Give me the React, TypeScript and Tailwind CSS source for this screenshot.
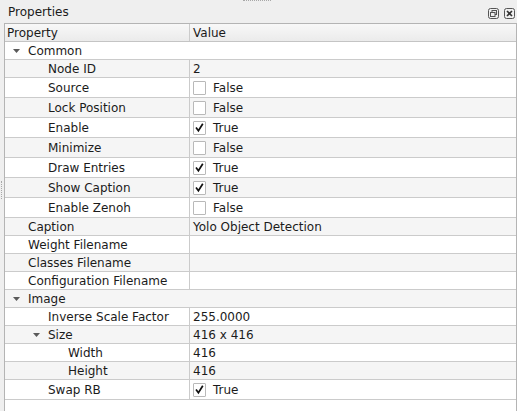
import React from "react";

type Row = {
	label: string;
	level: number;
	group?: boolean;
	expander?: boolean;
	value?: string;
	check?: boolean;
	tall?: boolean;
};

const rows: Row[] = [
	{ label: "Common", level: 0, group: true, expander: true },
	{ label: "Node ID", level: 1, value: "2" },
	{ label: "Source", level: 1, check: false, tall: true },
	{ label: "Lock Position", level: 1, check: false, tall: true },
	{ label: "Enable", level: 1, check: true, tall: true },
	{ label: "Minimize", level: 1, check: false, tall: true },
	{ label: "Draw Entries", level: 1, check: true, tall: true },
	{ label: "Show Caption", level: 1, check: true, tall: true },
	{ label: "Enable Zenoh", level: 1, check: false, tall: true },
	{ label: "Caption", level: 0, value: "Yolo Object Detection" },
	{ label: "Weight Filename", level: 0, value: "" },
	{ label: "Classes Filename", level: 0, value: "" },
	{ label: "Configuration Filename", level: 0, value: "" },
	{ label: "Image", level: 0, group: true, expander: true },
	{ label: "Inverse Scale Factor", level: 1, value: "255.0000" },
	{ label: "Size", level: 1, expander: true, value: "416 x 416" },
	{ label: "Width", level: 2, value: "416" },
	{ label: "Height", level: 2, value: "416" },
	{ label: "Swap RB", level: 1, check: true, tall: true },
];

const indent = ["pl-[23px]", "pl-[43px]", "pl-[63px]"];
const arrowPos = ["left-[8px]", "left-[28px]", "left-[48px]"];

function Arrow({ level }: { level: number }) {
	return (
		<svg
			className={`absolute top-1/2 -translate-y-1/2 ${arrowPos[level]}`}
			width="7"
			height="4"
			viewBox="0 0 7 4"
		>
			<path d="M0 0 L7 0 L3.5 4 Z" fill="#5a5a5a" />
		</svg>
	);
}

function CheckBox({ on }: { on: boolean }) {
	return (
		<span className="w-[13px] h-[14px] border border-[#b9b9b9] bg-white rounded-[1px] flex items-center justify-center">
			{on && (
				<svg width="11" height="11" viewBox="0 0 11 11">
					<path
						d="M2 5.6 L4.4 8.8 L8.8 1.8"
						fill="none"
						stroke="#111"
						strokeWidth="1.7"
					/>
				</svg>
			)}
		</span>
	);
}

function PropRow({ row, odd }: { row: Row; odd: boolean }) {
	const bg = odd ? "bg-[#f5f5f5]" : "bg-white";
	const h = row.tall ? "h-[20px]" : "h-[18px]";
	return (
		<div className={`flex ${h} border-b border-[#cbcbcb] ${bg}`}>
			<div
				className={`relative flex items-center ${indent[row.level]} ${
					row.group ? "flex-1" : "w-[185px] border-r border-[#cbcbcb]"
				}`}
			>
				{row.expander && <Arrow level={row.level} />}
				{row.label}
			</div>
			{!row.group && (
				<div className="flex-1 flex items-center pl-[3px]">
					{row.check !== undefined ? (
						<div className="flex items-center gap-[7px]">
							<CheckBox on={row.check} />
							<span>{row.check ? "True" : "False"}</span>
						</div>
					) : (
						row.value
					)}
				</div>
			)}
		</div>
	);
}

export default function App() {
	return (
		<div
			className="relative w-[517px] h-[411px] bg-[#efefef] flex flex-col text-[12px] text-[#1b1b1b] overflow-hidden"
			style={{ fontFamily: '"DejaVu Sans", Verdana, sans-serif' }}
		>
			{/* grips */}
			<div className="absolute top-0 left-[243px] w-[28px] h-[1px] border-t border-dotted border-[#a8a8a8]" />
			<div className="absolute top-[181px] left-[1px] w-[1px] h-[18px] border-l border-dotted border-[#a8a8a8]" />

			<div className="h-[23px] flex items-center pl-[8px] pr-[2px] shrink-0">
				<span className="flex-1 pt-[1px]">Properties</span>
				<div className="flex items-center gap-[5px] mt-[4px]">
					<svg width="11" height="11" viewBox="0 0 11 11">
						<rect x="0.5" y="0.5" width="10" height="10" rx="2" fill="none" stroke="#555" />
						<rect x="4" y="2.5" width="4.5" height="4" fill="none" stroke="#555" />
						<rect x="2.5" y="4.5" width="4.5" height="4" fill="#efefef" stroke="#555" />
					</svg>
					<svg width="11" height="11" viewBox="0 0 11 11">
						<rect x="0.5" y="0.5" width="10" height="10" rx="2" fill="none" stroke="#555" />
						<path d="M3 3 L8 8 M8 3 L3 8" stroke="#333" strokeWidth="1.6" />
					</svg>
				</div>
			</div>

			<div className="ml-[4px] flex-1 border border-b-0 border-[#b4b4b4] bg-white">
				<div className="flex h-[18px] border-b border-[#c4c4c4] bg-gradient-to-b from-[#f8f8f8] to-[#ebebeb]">
					<div className="w-[185px] border-r border-[#cbcbcb] pl-[2px] flex items-center">
						Property
					</div>
					<div className="flex-1 pl-[3px] flex items-center">Value</div>
				</div>
				{rows.map((r, i) => (
					<PropRow key={r.label} row={r} odd={i % 2 === 1} />
				))}
			</div>
		</div>
	);
}
